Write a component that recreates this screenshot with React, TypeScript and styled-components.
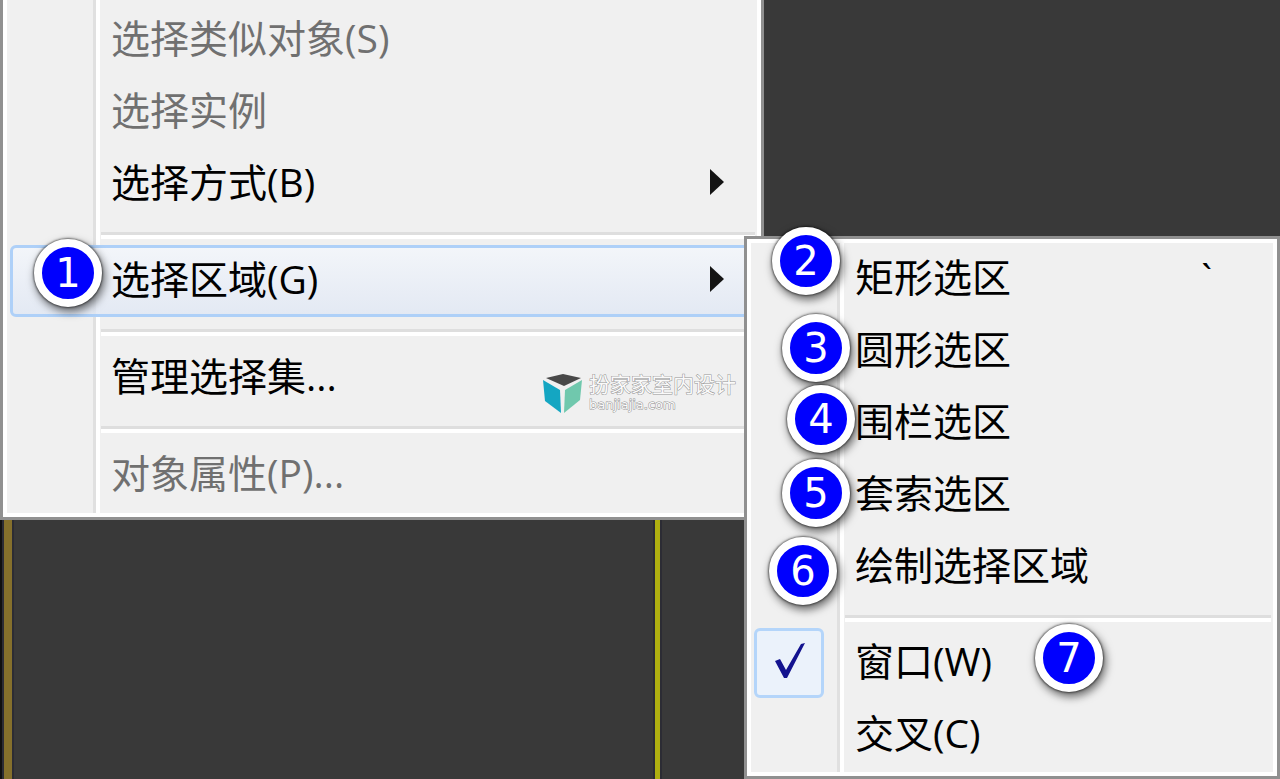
import React from "react";
import styled, { createGlobalStyle, css } from "styled-components";

const GlobalStyle = createGlobalStyle`
  *, *::before, *::after { box-sizing: border-box; }
  body {
    margin: 0;
    background: #393939;
    color: #000;
    font-family: "Open Sans", "Noto Sans CJK SC", sans-serif;
    font-size: 39px;
  }
`;

const Screen = styled.main`
  display: grid;
  grid-template-columns: minmax(0, 744fr) minmax(0, 536fr);
  grid-template-rows: auto 1fr;
  min-height: 100vh;
  overflow: hidden;
`;

const Panel = styled.div`
  position: relative;
  border: 3px solid #909090;
  background: #fff;
  padding: 4px;
`;

const MainPanel = styled(Panel)`
  grid-column: 1;
  grid-row: 1;
  margin-right: -20px;
  border-top: 0;
  padding-top: 0;
`;

const SubPanel = styled(Panel)`
  grid-column: 2;
  grid-row: 1 / 3;
  align-self: start;
  margin-top: 236px;
`;

const MenuList = styled.div<{ $top?: number; $bottom?: number }>`
  display: flex;
  flex-direction: column;
  padding: ${(p) => p.$top ?? 0}px 0 ${(p) => p.$bottom ?? 0}px;
  background:
    linear-gradient(90deg, transparent 86px, #e0e0e0 86px, #e0e0e0 89px, #fff 89px, #fff 93px, transparent 93px),
    #f0f0f0;
`;

const rowStyle = css`
  position: relative;
  display: flex;
  align-items: center;
  height: 72px;
  margin: 0 0 0 3px;
  padding: 0 30px 4px 98px;
  border: 3px solid transparent;
  border-radius: 6px;
  background: none;
  font: inherit;
  line-height: 60px;
  color: #000;
  text-align: left;
  white-space: nowrap;
`;

const MenuItem = styled.button<{ $active?: boolean }>`
  ${rowStyle}
  &:disabled { color: #707070; }
  ${(p) =>
    p.$active &&
    css`
      border-color: #aed0f8;
      background: linear-gradient(rgba(243, 246, 251, 0.85), rgba(225, 232, 244, 0.85)) padding-box;
    `}
`;

const RadioItem = styled.label`
  ${rowStyle}
  padding-left: 0;
  border-top: 0;
  border-left: 0;
`;

const TickBox = styled.span`
  display: grid;
  align-self: flex-start;
  width: 70px;
  height: 70px;
  margin-right: 31px;
  > * { grid-area: 1 / 1; }
  svg { visibility: hidden; }
  input:checked + svg { visibility: visible; }
`;

const Radio = styled.input`
  appearance: none;
  width: 70px;
  height: 70px;
  margin: 0;
  border-radius: 6px;
  &:checked {
    border: 3px solid #b4d5fa;
    background: #ebf2fb;
  }
`;

const Label = styled.span`
  flex: 1;
`;

const Shortcut = styled.kbd`
  margin-right: 28px;
  font: inherit;
`;

const Separator = styled.hr`
  width: auto;
  height: 7px;
  margin: 12px 2px 6px 94px;
  border: 0;
  border-top: 3px solid #dedede;
  background: #fff;
`;

const Badge = styled.span<{ $x: number; $y: number }>`
  position: absolute;
  z-index: 2;
  left: ${(p) => p.$x}px;
  top: ${(p) => p.$y}px;
  display: flex;
  align-items: center;
  justify-content: center;
  width: 68px;
  height: 68px;
  border: 8px solid #fff;
  border-radius: 50%;
  background: #0000fe;
  box-shadow: 0 0 2px 1px rgba(0, 0, 0, 0.5), 2px 4px 8px 1px rgba(0, 0, 0, 0.55);
  color: #fff;
  font: 40px/52px "DejaVu Sans", sans-serif;
`;

const Watermark = styled.div`
  position: absolute;
  left: 540px;
  top: 373px;
  display: flex;
  gap: 6px;
  color: #fafafa;
  -webkit-text-stroke: 1px #949494;
  paint-order: stroke fill;
`;

const WatermarkText = styled.div`
  display: flex;
  flex-direction: column;
  white-space: nowrap;
`;

const WatermarkName = styled.span`
  font: 21px/24px "Liberation Sans", "Noto Sans CJK SC", sans-serif;
`;

const WatermarkSite = styled.span`
  font: 13px/15px "DejaVu Sans", sans-serif;
`;

const Viewport = styled.div`
  grid-column: 1;
  grid-row: 2;
  display: flex;
  justify-content: space-between;
  padding-right: 84px;
  border-left: 4px solid #101010;
`;

const Guide = styled.span<{ $width: number; $color: string }>`
  width: ${(p) => p.$width}px;
  background: ${(p) => p.$color};
  box-shadow: 0 0 0 2px #2c2c34;
`;

const Arrow = () => (
  <svg width="14" height="26" viewBox="0 0 14 26" aria-hidden="true">
    <path d="M0 0 L14 13 L0 26 Z" fill="#141414" />
  </svg>
);

const Tick = () => (
  <svg width="70" height="70" viewBox="0 0 70 70" aria-hidden="true">
    <path d="M21 33 L26 31 L32 42 L47 16 L51 15 L33 50 L30 50 Z" fill="#13138f" />
  </svg>
);

const Logo = () => (
  <svg width="40" height="41" viewBox="0 0 40 41" aria-hidden="true">
    <path d="M3 5 L20 1 L38 5 L21 13 Z" fill="#484848" />
    <path d="M0 7 L17 17 L18 40 L2 28 Z" fill="#14a6c2" />
    <path d="M39 7 L22 17 L21 40 L37 27 Z" fill="#70c8ad" />
  </svg>
);

const shapes = [
  { label: "矩形选区", badge: 2, x: 15, y: -19, shortcut: "`" },
  { label: "圆形选区", badge: 3, x: 25, y: -4 },
  { label: "围栏选区", badge: 4, x: 30, y: -5 },
  { label: "套索选区", badge: 5, x: 25, y: -3 },
  { label: "绘制选择区域", badge: 6, x: 12, y: 3 },
];

export default function App() {
  return (
    <>
      <GlobalStyle />
      <Screen>
        <MainPanel>
          <MenuList role="menu" $top={4} $bottom={2}>
            <MenuItem role="menuitem" disabled><Label>选择类似对象(S)</Label></MenuItem>
            <MenuItem role="menuitem" disabled><Label>选择实例</Label></MenuItem>
            <MenuItem role="menuitem" aria-haspopup="menu"><Label>选择方式(B)</Label><Arrow /></MenuItem>
            <Separator />
            <MenuItem role="menuitem" aria-haspopup="menu" aria-expanded="true" $active>
              <Badge $x={21} $y={-9}>1</Badge>
              <Label>选择区域(G)</Label>
              <Arrow />
            </MenuItem>
            <Separator />
            <MenuItem role="menuitem"><Label>管理选择集...</Label></MenuItem>
            <Separator />
            <MenuItem role="menuitem" disabled><Label>对象属性(P)...</Label></MenuItem>
          </MenuList>
          <Watermark>
            <Logo />
            <WatermarkText>
              <WatermarkName>扮家家室内设计</WatermarkName>
              <WatermarkSite>banjiajia.com</WatermarkSite>
            </WatermarkText>
          </Watermark>
        </MainPanel>

        <Viewport>
          <Guide $width={8} $color="#85702c" />
          <Guide $width={5} $color="#b0b010" />
        </Viewport>

        <SubPanel>
          <MenuList role="menu">
            {shapes.map((s) => (
              <MenuItem key={s.badge} role="menuitem">
                <Badge $x={s.x} $y={s.y}>{s.badge}</Badge>
                <Label>{s.label}</Label>
                {s.shortcut && <Shortcut>{s.shortcut}</Shortcut>}
              </MenuItem>
            ))}
            <Separator />
            <RadioItem>
              <TickBox><Radio type="radio" name="mode" defaultChecked /><Tick /></TickBox>
              <Label>窗口(W)</Label>
              <Badge $x={281} $y={-4}>7</Badge>
            </RadioItem>
            <RadioItem>
              <TickBox><Radio type="radio" name="mode" /><Tick /></TickBox>
              <Label>交叉(C)</Label>
            </RadioItem>
          </MenuList>
        </SubPanel>
      </Screen>
    </>
  );
}
